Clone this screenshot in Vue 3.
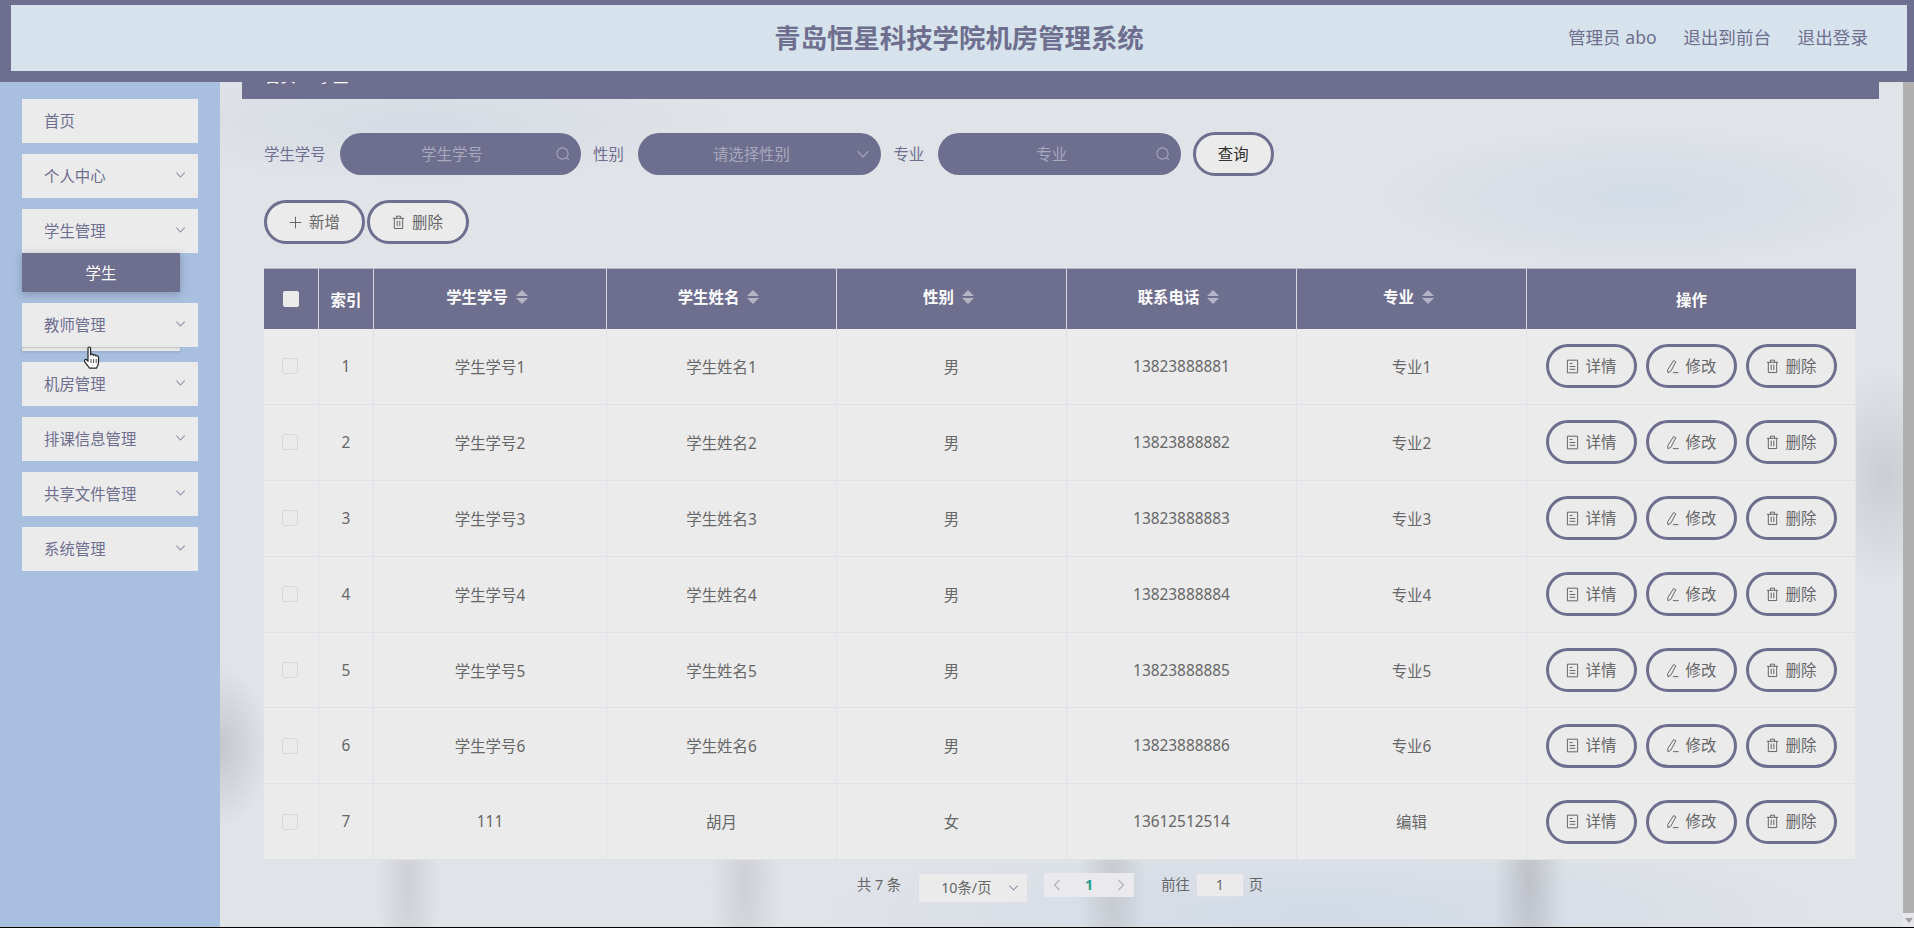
<script setup>
const menu = [
  { label: '首页', arrow: false },
  { label: '个人中心', arrow: true },
  { label: '学生管理', arrow: true, sub: '学生' },
  { label: '教师管理', arrow: true, sliver: true },
  { label: '机房管理', arrow: true },
  { label: '排课信息管理', arrow: true },
  { label: '共享文件管理', arrow: true },
  { label: '系统管理', arrow: true }
]
const sortCols = ['学生学号', '学生姓名', '性别', '联系电话', '专业']
const rows = [
  { no: '学生学号1', name: '学生姓名1', sex: '男', tel: '13823888881', major: '专业1' },
  { no: '学生学号2', name: '学生姓名2', sex: '男', tel: '13823888882', major: '专业2' },
  { no: '学生学号3', name: '学生姓名3', sex: '男', tel: '13823888883', major: '专业3' },
  { no: '学生学号4', name: '学生姓名4', sex: '男', tel: '13823888884', major: '专业4' },
  { no: '学生学号5', name: '学生姓名5', sex: '男', tel: '13823888885', major: '专业5' },
  { no: '学生学号6', name: '学生姓名6', sex: '男', tel: '13823888886', major: '专业6' },
  { no: '111', name: '胡月', sex: '女', tel: '13612512514', major: '编辑' }
]
</script>

<template>
  <div class="page">
    <header class="top">
      <div class="top-inner">
        <span></span>
        <h1 class="title">青岛恒星科技学院机房管理系统</h1>
        <nav class="top-links">
          <span>管理员 abo</span>
          <span>退出到前台</span>
          <span>退出登录</span>
        </nav>
      </div>
    </header>

    <div class="body">
      <aside class="side">
        <div v-for="m in menu" :key="m.label" class="group">
          <div class="item">
            <span>{{ m.label }}</span>
            <svg v-if="m.arrow" class="chev" viewBox="0 0 12 8"><path d="M1.5 1.5 6 6.2l4.5-4.7" /></svg>
          </div>
          <div v-if="m.sub" class="sub">{{ m.sub }}</div>
          <div v-if="m.sliver" class="sliver"></div>
        </div>
      </aside>

      <main class="main">
        <div class="crumb"><span class="crumb-text">首页<i>/</i>学生</span></div>

        <div class="search">
          <label>学生学号</label>
          <div class="field w241">
            <span>学生学号</span>
            <svg class="field-ic" viewBox="0 0 16 16"><circle cx="7.5" cy="7.5" r="5.6" /><path d="m11.6 11.6 2.2 2.2" /></svg>
          </div>
          <label>性别</label>
          <div class="field w243">
            <span>请选择性别</span>
            <svg class="field-ic" viewBox="0 0 16 16"><path d="M2.5 5.2 8 11l5.5-5.8" /></svg>
          </div>
          <label>专业</label>
          <div class="field w243">
            <span>专业</span>
            <svg class="field-ic" viewBox="0 0 16 16"><circle cx="7.5" cy="7.5" r="5.6" /><path d="m11.6 11.6 2.2 2.2" /></svg>
          </div>
          <button class="pill query">查询</button>
        </div>

        <div class="tools">
          <button class="pill add">
            <svg class="ic" viewBox="0 0 14 14"><path d="M7 .8v12.4M.8 7h12.4" /></svg>新增
          </button>
          <button class="pill del">
            <svg class="ic" viewBox="0 0 14 16"><path d="M1 3.5h12M4.8 3.3V1.2h4.4v2.1M2.5 3.5v11h9v-11M5.6 6v6M8.4 6v6" /></svg>删除
          </button>
        </div>

        <table class="grid">
          <colgroup>
            <col style="width:55px" /><col style="width:55px" /><col style="width:233px" />
            <col style="width:230px" /><col style="width:230px" /><col style="width:230px" />
            <col style="width:230px" /><col style="width:329px" />
          </colgroup>
          <thead>
            <tr>
              <th class="head-check"><span class="head-box"></span></th>
              <th class="plain">索引</th>
              <th v-for="c in sortCols" :key="c" class="sortable">
                <span class="th-in">{{ c }}<span class="sort"><b class="up"></b><b class="down"></b></span></span>
              </th>
              <th class="plain">操作</th>
            </tr>
          </thead>
          <tbody>
            <tr v-for="(r, i) in rows" :key="i">
              <td class="cell-check"><span class="box"></span></td>
              <td>{{ i + 1 }}</td>
              <td>{{ r.no }}</td>
              <td>{{ r.name }}</td>
              <td>{{ r.sex }}</td>
              <td>{{ r.tel }}</td>
              <td>{{ r.major }}</td>
              <td>
                <div class="acts">
                  <button class="pill act">
                    <svg class="ic" viewBox="0 0 14 16"><path d="M1.5 1.2h11v13.6h-11zM4 4.8h3M4 8h6M4 11h6" /></svg>详情
                  </button>
                  <button class="pill act">
                    <svg class="ic" viewBox="0 0 14 16"><path d="M8.2 1.6 10.6 3 5 13.4l-3 1.2-.1-3.2zM7.5 14.6h6" /></svg>修改
                  </button>
                  <button class="pill act">
                    <svg class="ic" viewBox="0 0 14 16"><path d="M1 3.5h12M4.8 3.3V1.2h4.4v2.1M2.5 3.5v11h9v-11M5.6 6v6M8.4 6v6" /></svg>删除
                  </button>
                </div>
              </td>
            </tr>
          </tbody>
        </table>

        <div class="pager">
          <span>共 7 条</span>
          <div class="size">
            <span>10条/页</span>
            <svg class="size-ic" viewBox="0 0 12 8"><path d="M1.5 1.5 6 6.2l4.5-4.7" /></svg>
          </div>
          <div class="pages">
            <svg class="pg" viewBox="0 0 8 12"><path d="M6.5 1 1.5 6l5 5" /></svg>
            <b>1</b>
            <svg class="pg" viewBox="0 0 8 12"><path d="M1.5 1l5 5-5 5" /></svg>
          </div>
          <span class="goto">前往</span>
          <div class="jump">1</div>
          <span>页</span>
        </div>
      </main>

      <div class="scroll">
        <div class="thumb"></div>
        <div class="track"><i></i></div>
      </div>
    </div>

    <svg class="cursor" viewBox="0 0 18 24">
      <path d="M5 2.2c0-1.6 2.6-1.6 2.6 0v6.6c.6-1 2.6-.9 2.7.5.6-.9 2.5-.7 2.6.7.8-.7 2.6-.4 2.6 1.2v5c0 2.8-1 4.5-2 6H6.5c-1-1.5-3-4-4.7-6.4-1-1.5.5-3 2-2L5 15.2z" />
      <path d="M8 13v4M10.6 13v4M13.2 13v4" />
    </svg>
  </div>
</template>

<style>
html, body { margin: 0; background: #000; overflow: hidden; }
</style>

<style scoped>
.page {
  position: relative;
  width: 1914px;
  height: 927px;
  display: flex;
  flex-direction: column;
  overflow: hidden;
  font-family: "Noto Sans", "Noto Sans CJK SC", "Liberation Sans", sans-serif;
  font-size: 15.4px;
  color: #666;
}
.top {
  flex: none;
  height: 82px;
  box-sizing: border-box;
  padding: 5px 7px 11px 11px;
  background: #6e6e8f;
  position: relative;
  z-index: 2;
}
.top-inner {
  height: 66px;
  background: #d6e3ec;
  display: grid;
  grid-template-columns: 1fr auto 1fr;
  align-items: center;
  padding-right: 39px;
  padding-left: 39px;
}
.title {
  margin: 0;
  font-size: 26.4px;
  font-weight: 700;
  color: #6e6e8f;
  line-height: 1;
}
.top-links {
  justify-self: end;
  display: flex;
  gap: 26.5px;
  font-size: 17.6px;
  color: #6e6e8f;
  line-height: 1;
}
.body { flex: 1; display: flex; min-height: 0; }
.side {
  flex: none;
  width: 220px;
  box-sizing: border-box;
  padding: 17px 22px 0;
  background: #a8bfdf;
  display: flex;
  flex-direction: column;
  gap: 11px;
}
.item {
  width: 176px;
  height: 44px;
  box-sizing: border-box;
  padding: 0 12px 2px 22px;
  background: #ebebec;
  color: #6e6e8f;
  display: flex;
  align-items: center;
  justify-content: space-between;
}
.chev { width: 11px; height: 8px; margin-top: -1px; }
.chev path, .size-ic path { fill: none; stroke: #8e8ea8; stroke-width: 1.1; }
.sub {
  width: 158px;
  height: 39px;
  background: #6e6e8f;
  color: #fff;
  display: flex;
  align-items: center;
  justify-content: center;
  box-sizing: border-box;
  box-shadow: 0 2px 8px rgba(60, 60, 90, .35);
  position: relative;
}
.sliver {
  width: 158px;
  height: 4px;
  background: #ebebec;
  box-shadow: inset 0 1px 2px rgba(0, 0, 0, .18), 0 1px 3px rgba(60, 60, 90, .2);
}
.main {
  flex: 1;
  min-width: 0;
  padding-left: 44px;
  box-sizing: border-box;
  overflow: hidden;
  background-color: #e0e3e8;
  background-image:
    radial-gradient(ellipse 32px 150px at 188px 800px, rgba(190, 192, 197, .55), transparent 100%),
    radial-gradient(ellipse 36px 150px at 525px 800px, rgba(190, 192, 197, .55), transparent 100%),
    radial-gradient(ellipse 34px 150px at 893px 800px, rgba(185, 187, 192, .6), transparent 100%),
    radial-gradient(ellipse 36px 150px at 1309px 800px, rgba(178, 180, 187, .7), transparent 100%),
    radial-gradient(ellipse 50px 80px at 0 665px, rgba(175, 175, 180, .55), transparent 100%),
    radial-gradient(ellipse 70px 110px at 1665px 395px, rgba(185, 187, 193, .55), transparent 100%),
    radial-gradient(ellipse 260px 70px at 1420px 115px, rgba(205, 216, 230, .7), transparent 100%),
    radial-gradient(ellipse 320px 60px at 200px 40px, rgba(210, 216, 226, .7), transparent 100%),
    radial-gradient(ellipse 500px 80px at 1100px 830px, rgba(205, 216, 230, .8), transparent 100%);
}
.crumb {
  height: 17px;
  margin-left: -22px;
  margin-right: 24px;
  padding-left: 23px;
  background: #6e6e8f;
  overflow: hidden;
  color: #fff;
}
.crumb-text { display: block; line-height: 18px; margin-top: -14px; white-space: nowrap; }
.crumb-text i { font-style: normal; margin: 0 8px; }
.search {
  margin-top: 33px;
  height: 44px;
  display: flex;
  align-items: center;
}
.search label { color: #6e6e8f; margin-right: 14px; white-space: nowrap; padding-bottom: 2px; }
.field {
  height: 42px;
  box-sizing: border-box;
  border-radius: 21px;
  background: #6e6e8f;
  color: #a9a9bd;
  padding: 0 40px 2px 24px;
  position: relative;
  display: flex;
  align-items: center;
  justify-content: center;
  margin-right: 12.5px;
}
.w241 { width: 241px; }
.w243 { width: 243px; }
.field-ic {
  position: absolute;
  right: 10px;
  top: 13px;
  width: 16px;
  height: 16px;
}
.field-ic circle, .field-ic path { fill: none; stroke: #a9a9bd; stroke-width: 1.1; }
.pill {
  box-sizing: border-box;
  border: 3px solid #6e6e8f;
  background: #ebebec;
  color: #666;
  font: inherit;
  height: 44px;
  border-radius: 22px;
  padding: 0 0 2px;
  display: inline-flex;
  align-items: center;
  justify-content: center;
}
.query { width: 81px; color: #333; margin-left: -1px; }
.tools { margin-top: 24px; display: flex; gap: 1.5px; }
.add { width: 101px; }
.del { width: 102px; }
.ic { width: 13px; height: 15px; margin-right: 7px; margin-top: 2px; flex: none; }
.ic path { fill: none; stroke: #5c5c5c; stroke-width: 1; }
.grid {
  margin-top: 24px;
  width: 1592px;
  table-layout: fixed;
  border-collapse: separate;
  border-spacing: 0;
  background: #ebebec;
}
.grid th {
  height: 61px;
  padding: 0;
  background: #6e6e8f;
  color: #fff;
  font-weight: 700;
  font-size: 15.4px;
  border-right: 1px solid #d7d7e2;
  border-top: 1px solid #b7b7c8;
  box-sizing: border-box;
}
.grid th:last-child { border-right: 0; }
.sortable { padding-bottom: 5px !important; padding-right: 6px !important; }
.th-in { display: inline-flex; align-items: center; gap: 8px; }
.sort { display: inline-flex; flex-direction: column; gap: 2px; }
.sort b { display: block; width: 0; height: 0; border-left: 6px solid transparent; border-right: 6px solid transparent; }
.sort .up { border-bottom: 6px solid #b4b4c6; }
.sort .down { border-top: 6px solid #b4b4c6; }
.head-box {
  display: block;
  width: 16px;
  height: 16px;
  margin: 0 auto;
  background: #ebebec;
  border-radius: 2px;
}
.grid td {
  height: 75.9px;
  padding: 0;
  text-align: center;
  color: #666;
  border-right: 1px solid #dfe0e8;
  border-bottom: 1px solid #dfe0e8;
  box-sizing: border-box;
}
.grid td:last-child { border-right: 1px solid #e4e4ea; }
.box {
  display: block;
  width: 16px;
  height: 16px;
  box-sizing: border-box;
  margin: 0 auto;
  border: 1px solid #d6d7df;
  border-radius: 2px;
  background: #ebebec;
  position: relative;
  left: -1px;
}
.acts { display: flex; justify-content: center; gap: 9px; }
.act { width: 91px; background: transparent; }
.pager {
  margin-top: 13px;
  width: 1592px;
  height: 30px;
  display: flex;
  justify-content: center;
  align-items: flex-start;
  font-size: 14.3px;
  color: #666;
  line-height: 24px;
}
.size {
  width: 110px;
  height: 30px;
  box-sizing: border-box;
  margin-left: 17px;
  padding: 0 8px 0 22px;
  background: #ebebec;
  border: 1px solid #dcdfe6;
  border-radius: 3px;
  display: flex;
  align-items: center;
  justify-content: space-between;
}
.size-ic { width: 11px; height: 8px; }
.pages {
  width: 90px;
  height: 24px;
  margin-left: 16px;
  background: #e9e9ee;
  display: flex;
  align-items: center;
  justify-content: space-between;
  padding: 0 9px;
  box-sizing: border-box;
}
.pages b { color: #2a9d8f; font-size: 14.3px; }
.pg { width: 8px; height: 12px; }
.pg path { fill: none; stroke: #b4b5c0; stroke-width: 1.4; }
.goto { margin-left: 27px; }
.jump {
  width: 48px;
  height: 24px;
  margin: 0 5px 0 6px;
  box-sizing: border-box;
  background: #ebebec;
  border: 1px solid #dcdfe6;
  border-radius: 3px;
  text-align: center;
  line-height: 22px;
}
.scroll {
  flex: none;
  width: 11px;
  display: flex;
  flex-direction: column;
  background: #e6e7ea;
}
.thumb { flex: 1; background: #b0b0b0; }
.track { height: 14px; display: flex; align-items: center; justify-content: center; }
.track i {
  width: 0;
  height: 0;
  border-left: 4px solid transparent;
  border-right: 4px solid transparent;
  border-top: 5px solid #a0a0a0;
}
.cursor {
  position: absolute;
  left: 83px;
  top: 346px;
  width: 18px;
  height: 24px;
  z-index: 3;
}
.cursor path { fill: #fff; stroke: #222; stroke-width: 1.2; stroke-linejoin: round; }
.cursor path + path { fill: none; stroke-width: .8; }
</style>
